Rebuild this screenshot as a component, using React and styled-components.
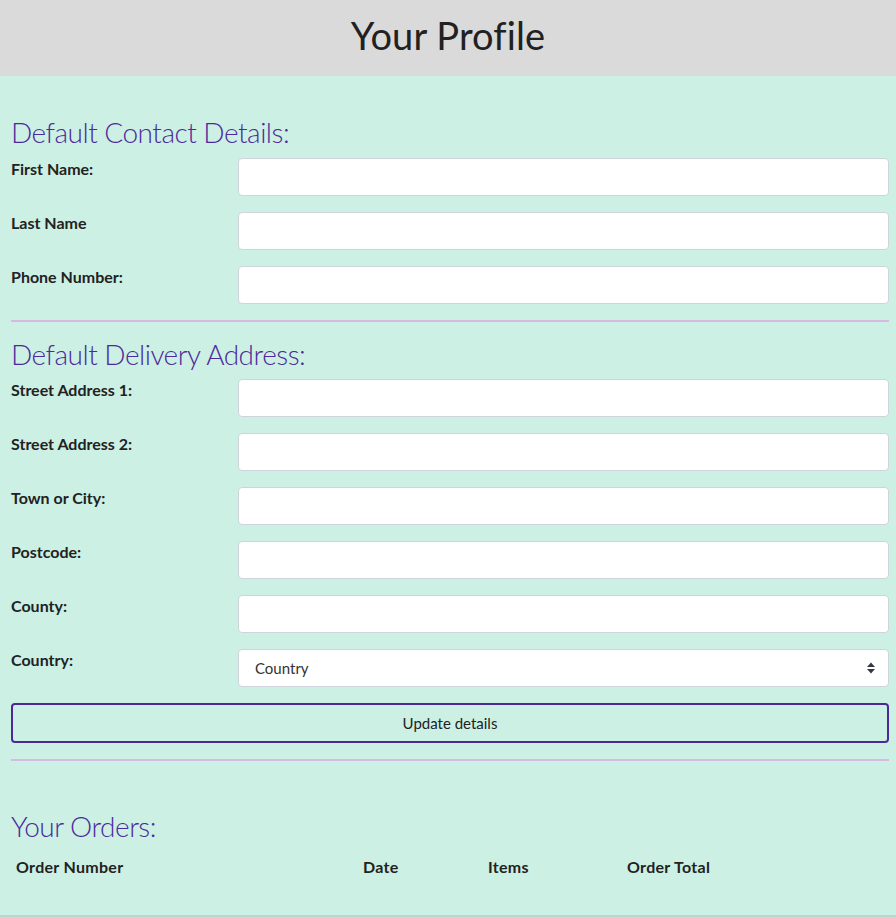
import React from "react";
import styled, { createGlobalStyle } from "styled-components";

const Global = createGlobalStyle`
  html, body { margin: 0; padding: 0; }
  body {
    font-family: "Lato", "Open Sans", sans-serif;
    background: #cdf0e4;
    color: #212529;
  }
  * { box-sizing: border-box; }
`;

const Page = styled.div`
  width: 896px;
  min-height: 917px;
  background: #cdf0e4;
  border-bottom: 2px solid #b9d8cd;
`;

const Header = styled.header`
  height: 76px;
  background: #dadada;
  display: flex;
  align-items: center;
  justify-content: center;
  padding-bottom: 7px;
`;

const Title = styled.h1`
  margin: 0;
  font-weight: 400;
  font-size: 38px;
  color: #212121;
  letter-spacing: 0.1px;
`;

const Main = styled.main`
  padding: 38px 7px 0 11px;
`;

const SectionTitle = styled.h2`
  margin: ${(p) => p.$mt || 0}px 0 ${(p) => p.$mb || 8}px;
  font-size: 28px;
  line-height: 36px;
  font-weight: 300;
  letter-spacing: -0.5px;
  color: #4c2a9c;
`;

const Row = styled.div`
  display: grid;
  grid-template-columns: 215px 1fr;
  column-gap: 12px;
  margin-bottom: 16px;
`;

const Label = styled.label`
  font-size: 16px;
  font-weight: 700;
  color: #222;
  padding-top: 1px;
`;

const Input = styled.input`
  height: 38px;
  width: 100%;
  border: 1px solid #ced4da;
  border-radius: 4px;
  background: #fff;
  padding: 0 16px;
  font: inherit;
`;

const Select = styled.div`
  height: 38px;
  width: 100%;
  border: 1px solid #ced4da;
  border-radius: 4px;
  background: #fff;
  padding: 0 12px 0 16px;
  display: flex;
  align-items: center;
  justify-content: space-between;
  font-size: 15px;
  color: #333;
`;

const Divider = styled.hr`
  margin: 0;
  border: 0;
  height: 2px;
  background: #d9b8e2;
`;

const Button = styled.button`
  display: block;
  width: 100%;
  height: 40px;
  background: transparent;
  border: 2px solid #4b2a98;
  border-radius: 4px;
  font-family: inherit;
  font-size: 15px;
  color: #222;
  margin: 0 0 16px;
`;

const Table = styled.table`
  border-collapse: collapse;
  width: 720px;
`;

const Th = styled.th`
  text-align: left;
  padding: 6px 5px;
  font-size: 16px;
  font-weight: 700;
  letter-spacing: 0.3px;
  color: #222;
  width: ${(p) => (p.$w ? `${p.$w}px` : "auto")};
`;

const Chevrons = () => (
  <svg width="10" height="14" viewBox="0 0 10 14">
    <path d="M1 6 L5 1.5 L9 6 Z" fill="#343a40" />
    <path d="M1 8 L5 12.5 L9 8 Z" fill="#343a40" />
  </svg>
);

const contact = ["First Name:", "Last Name", "Phone Number:"];
const address = [
  "Street Address 1:",
  "Street Address 2:",
  "Town or City:",
  "Postcode:",
  "County:",
];

export default function App() {
  return (
    <Page>
      <Global />
      <Header>
        <Title>Your Profile</Title>
      </Header>
      <Main>
        <SectionTitle $mb={8}>Default Contact Details:</SectionTitle>
        {contact.map((l) => (
          <Row key={l}>
            <Label>{l}</Label>
            <Input />
          </Row>
        ))}
        <Divider />
        <SectionTitle $mt={14} $mb={7}>
          Default Delivery Address:
        </SectionTitle>
        {address.map((l) => (
          <Row key={l}>
            <Label>{l}</Label>
            <Input />
          </Row>
        ))}
        <Row>
          <Label>Country:</Label>
          <Select>
            <span>Country</span>
            <Chevrons />
          </Select>
        </Row>
        <Button>Update details</Button>
        <Divider />
        <SectionTitle $mt={47} $mb={7}>
          Your Orders:
        </SectionTitle>
        <Table>
          <thead>
            <tr>
              <Th $w={347}>Order Number</Th>
              <Th $w={125}>Date</Th>
              <Th $w={139}>Items</Th>
              <Th>Order Total</Th>
            </tr>
          </thead>
        </Table>
      </Main>
    </Page>
  );
}
